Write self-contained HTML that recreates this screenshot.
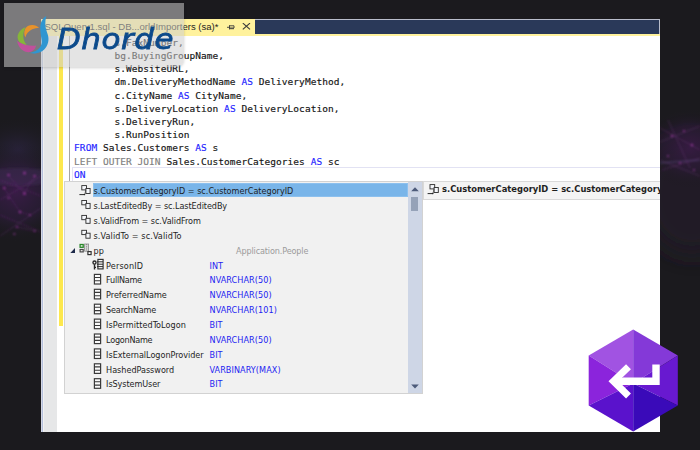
<!DOCTYPE html>
<html>
<head>
<meta charset="utf-8">
<title>SQL Complete</title>
<style>
html,body{margin:0;padding:0;}
body{width:700px;height:450px;overflow:hidden;position:relative;background:#1b1a1e;
 font-family:"DejaVu Sans Condensed","Liberation Sans",sans-serif;}
.abs{position:absolute;}
#bg{left:0;top:0;width:700px;height:450px;background:#1b1a1e;}
#win{left:41px;top:19px;width:619px;height:412.8px;background:#fff;overflow:hidden;}
#tab{left:0;top:0;width:213.5px;height:16.5px;background:#fff29d;}
#tabtxt{left:3.5px;top:2px;font:9.55px/11px "Liberation Sans",sans-serif;color:#1e1e1e;white-space:nowrap;}
#bar{left:213.5px;top:0;width:405.5px;height:14.5px;background:#2a3959;box-shadow:inset 0 1px 0 #b9bdcb, inset -1px 0 0 #b9bdcb;}
#yline{left:0;top:14.5px;width:619px;height:2px;background:#fff29d;}
#margin{left:0;top:16.5px;width:15.5px;height:397px;background:#e6e7e8;box-shadow:inset 1px 0 0 #d4d8e4, inset 2px 0 0 #b4bfdc, inset 3px 0 0 #f1f1f1;}
#ybar{left:18px;top:16.5px;width:4px;height:290px;background:#fde84e;}
#gline{left:28px;top:16.5px;width:1px;height:146px;background:#a5a5a5;}
#code{left:33.1px;top:16.9px;font:9.5px/13.18px "DejaVu Sans Mono","Liberation Mono",monospace;letter-spacing:.05px;color:#141414;white-space:pre;-webkit-text-stroke:.15px;}
#code .k{color:#1f1fff;}
#code .g{color:#808080;}
#curline{left:30.5px;top:148.3px;width:600px;height:16px;border:1.5px solid #e2e2f3;box-sizing:border-box;}
#popup{left:23px;top:162px;width:358.5px;height:213px;background:#f1f1f1;border:1px solid #d2d2d2;box-sizing:border-box;overflow:hidden;}
#sel{left:28px;top:1px;width:314.5px;height:14px;background:#79b5e9;box-shadow:inset 0 0 0 1px #8cc0ee;}
.row{position:absolute;left:0;height:14.9px;line-height:14.9px;font-size:9px;color:#1e1e1e;white-space:nowrap;}
.row span{position:absolute;top:0;}
.ty{color:#1d1df2;letter-spacing:.08px;}
#sb{left:342.5px;top:0;width:14px;height:213px;background:#ced6e6;}
#thumb{left:3px;top:14.5px;width:7.5px;height:14px;background:#95a2b8;}
#rp{left:382px;top:162px;width:260px;height:19px;background:#f4f4f4;border:1px solid #d9d9d9;box-sizing:border-box;}
#rptxt{left:401px;top:163.2px;font:bold 9.3px/13px "DejaVu Sans Condensed","Liberation Sans",sans-serif;color:#1e1e1e;white-space:nowrap;}
#wm{left:4px;top:3px;width:180px;height:64px;background:rgba(205,205,205,.54);border-radius:0 0 8px 0;box-shadow:0 1px 3px rgba(0,0,0,.18);}
#wmtxt{left:57px;top:20px;font:italic 28.5px/40px "DejaVu Sans","Liberation Sans",sans-serif;letter-spacing:.5px;color:#0c4a8b;-webkit-text-stroke:.8px #0c4a8b;white-space:nowrap;transform:scaleX(1.085);transform-origin:0 0;}
</style>
</head>
<body>
<div id="bg" class="abs">
<svg width="700" height="450" viewBox="0 0 700 450" style="position:absolute;left:0;top:0">
  <defs>
    <radialGradient id="gl1"><stop offset="0" stop-color="#3a1c48" stop-opacity=".95"/><stop offset=".55" stop-color="#2c1d3a" stop-opacity=".7"/><stop offset="1" stop-color="#1b1a1e" stop-opacity="0"/></radialGradient>
    <radialGradient id="gl2"><stop offset="0" stop-color="#2b2440" stop-opacity=".9"/><stop offset="1" stop-color="#1b1a1e" stop-opacity="0"/></radialGradient>
    <radialGradient id="gr1"><stop offset="0" stop-color="#371b43" stop-opacity=".95"/><stop offset=".55" stop-color="#2a1b35" stop-opacity=".7"/><stop offset="1" stop-color="#1b1a1e" stop-opacity="0"/></radialGradient>
    <filter id="bl2" x="-50%" y="-50%" width="200%" height="200%"><feGaussianBlur stdDeviation="12"/></filter>
    <filter id="bl" x="-20%" y="-20%" width="140%" height="140%"><feGaussianBlur stdDeviation="1"/></filter>
  </defs>
  <ellipse cx="18" cy="150" rx="50" ry="34" fill="url(#gl2)"/>
  <ellipse cx="16" cy="192" rx="52" ry="50" fill="url(#gl1)"/>
  <ellipse cx="18" cy="177" rx="42" ry="9" fill="#4a3362" fill-opacity=".35" filter="url(#bl)"/>
  <ellipse cx="692" cy="195" rx="50" ry="60" fill="#231a2b" fill-opacity=".7" filter="url(#bl2)"/>
  <ellipse cx="690" cy="148" rx="48" ry="40" fill="url(#gr1)"/>
  <g filter="url(#bl)" fill="none" stroke="#8a3596" stroke-opacity=".3" stroke-width=".9">
    <path d="M0 180L41 196M0 200L41 176M0 215L41 232M0 236L41 208M8 175L24 193L35 176M4 188L20 212L30 215M17 227L35 231"/>
    <path d="M660 142L700 126M660 128L700 150M662 170L700 158M668 120L690 168M660 160L700 176" stroke="#9040a0"/>
    <path d="M660 163L700 160" stroke="#6a5a98" stroke-opacity=".6"/>
  </g>
  <g filter="url(#bl)" fill="#a23aa6" fill-opacity=".75">
    <circle cx="8.6" cy="175" r="1.3"/><circle cx="24.5" cy="173" r="1.5"/><circle cx="34.6" cy="176" r="1.2"/>
    <circle cx="4.3" cy="188" r="1.2"/><circle cx="24.5" cy="193.5" r="1.5"/><circle cx="8.6" cy="198" r="1.1"/>
    <circle cx="20" cy="212" r="1.3"/><circle cx="30" cy="215" r="1"/><circle cx="17" cy="227" r="1.1"/>
    <circle cx="34.6" cy="231" r="1"/><circle cx="14.4" cy="234" r="1"/>
    <circle cx="672" cy="136" r="1.2"/><circle cx="684" cy="131" r="1.1"/><circle cx="692" cy="145" r="1.2"/>
    <circle cx="668" cy="156" r="1"/><circle cx="680" cy="163" r="1.1"/><circle cx="694" cy="170" r="1"/>
  </g>
</svg>
</div>

<div id="win" class="abs">
  <div id="tab" class="abs"></div>
  <div id="tabtxt" class="abs">SQLQuery1.sql - DB...orldImporters (sa)*</div>
  <svg class="abs" style="left:185px;top:4px" width="26" height="9" viewBox="0 0 26 9">
    <g fill="none" stroke="#3a3a3a" stroke-width="0.9">
      <path d="M1 4.3H3.5M3.5 2.2V6.4M3.5 2.8H8V5H3.5M3.5 5.7H8"/>
      <path d="M16.8 0.1L24 6.4M24 0.1L16.8 6.4" stroke-width="1.1"/>
    </g>
  </svg>
  <div id="bar" class="abs"></div>
  <div id="yline" class="abs"></div>
  <div id="margin" class="abs"></div>
  <div id="ybar" class="abs"></div>
  <div id="gline" class="abs"></div>
  <div id="curline" class="abs"></div>
<div id="code" class="abs">       s.FaxNumber,
       bg.BuyingGroupName,
       s.WebsiteURL,
       dm.DeliveryMethodName <span class="k">AS</span> DeliveryMethod,
       c.CityName <span class="k">AS</span> CityName,
       s.DeliveryLocation <span class="k">AS</span> DeliveryLocation,
       s.DeliveryRun,
       s.RunPosition
<span class="k">FROM</span> Sales.Customers <span class="k">AS</span> s
<span class="g">LEFT OUTER JOIN</span> Sales.CustomerCategories <span class="k">AS</span> sc
<span class="k">ON</span></div>

  <div id="popup" class="abs">
    <div id="sel" class="abs"></div>
    <div class="row" style="top:2.20px"><span style="left:28.5px">s.CustomerCategoryID = sc.CustomerCategoryID</span></div>
    <div class="row" style="top:17.06px"><span style="left:28.5px;letter-spacing:-0.075px">s.LastEditedBy = sc.LastEditedBy</span></div>
    <div class="row" style="top:31.92px"><span style="left:28.5px;letter-spacing:-0.06px">s.ValidFrom = sc.ValidFrom</span></div>
    <div class="row" style="top:46.78px"><span style="left:28.5px;letter-spacing:0.11px">s.ValidTo = sc.ValidTo</span></div>
    <div class="row" style="top:61.64px"><span style="left:28.5px">pp</span><span style="left:171px;color:#9b9b9b;letter-spacing:-.13px">Application.People</span></div>
    <div class="row" style="top:76.50px"><span style="left:41.1px;letter-spacing:0.16px">PersonID</span><span class="ty" style="left:144.5px">INT</span></div>
    <div class="row" style="top:91.36px"><span style="left:41.1px;letter-spacing:-0.24px">FullName</span><span class="ty" style="left:144.5px">NVARCHAR(50)</span></div>
    <div class="row" style="top:106.22px"><span style="left:41.1px;letter-spacing:-0.02px">PreferredName</span><span class="ty" style="left:144.5px">NVARCHAR(50)</span></div>
    <div class="row" style="top:121.08px"><span style="left:41.1px;letter-spacing:-0.18px">SearchName</span><span class="ty" style="left:144.5px">NVARCHAR(101)</span></div>
    <div class="row" style="top:135.94px"><span style="left:41.1px;letter-spacing:0.055px">IsPermittedToLogon</span><span class="ty" style="left:144.5px">BIT</span></div>
    <div class="row" style="top:150.80px"><span style="left:41.1px;letter-spacing:-0.24px">LogonName</span><span class="ty" style="left:144.5px">NVARCHAR(50)</span></div>
    <div class="row" style="top:165.66px"><span style="left:41.1px;letter-spacing:-0.02px">IsExternalLogonProvider</span><span class="ty" style="left:144.5px">BIT</span></div>
    <div class="row" style="top:180.52px"><span style="left:41.1px;letter-spacing:-0.02px">HashedPassword</span><span class="ty" style="left:144.5px">VARBINARY(MAX)</span></div>
    <div class="row" style="top:195.38px"><span style="left:41.1px;letter-spacing:-0.09px">IsSystemUser</span><span class="ty" style="left:144.5px">BIT</span></div>
    <div id="sb" class="abs">
      <div id="thumb" class="abs"></div>
      <svg class="abs" style="left:0;top:0" width="14" height="213" viewBox="0 0 14 213">
        <path d="M3.2 9.2L7 5.2L10.8 9.2Z" fill="#4d5b7a"/>
        <path d="M3.2 202.5L7 206.5L10.8 202.5Z" fill="#4d5b7a"/>
      </svg>
    </div>
  </div>

  <div id="rp" class="abs"></div>
  <div id="rptxt" class="abs">s.CustomerCategoryID = sc.CustomerCategoryID</div>
</div>


<svg id="icons" class="abs" style="left:0;top:0" width="700" height="450" viewBox="0 0 700 450">
  <defs>
    <g id="fk">
      <rect x="81.8" y="185.6" width="4.7" height="4.3" fill="#f6f8fc" stroke="#2a2a2a" stroke-width=".9"/>
      <rect x="85.9" y="188.5" width="4.2" height="5" fill="#f6f8fc" stroke="#2a2a2a" stroke-width=".9"/>
    </g>
    <g id="fkm">
      <path d="M85.7 190.2L84.9 194.2" stroke="#2a2a2a" stroke-width=".6" fill="none"/>
      <path d="M79.4 194.6H85.1" stroke="#2a2a2a" stroke-width="1" fill="none"/>
      <circle cx="84.4" cy="194.4" r=".75" fill="#2a2a2a"/>
    </g>
    <g id="col">
      <rect x="94.4" y="274.4" width="6.2" height="9.6" fill="#fafafa" stroke="#3a3a3a" stroke-width="1.2"/>
      <path d="M94.4 277.5H100.6M94.4 280.8H100.6" stroke="#3a3a3a" stroke-width="1.1" fill="none"/>
    </g>
  </defs>
  <use href="#fk"/><use href="#fkm"/>
  <use href="#fk" y="14.9"/>
  <use href="#fk" y="29.8"/>
  <use href="#fk" y="44.7"/>
  <!-- expand triangle -->
  <path d="M70.3 252.9H75V248Z" fill="#1e2a4a"/>
  <!-- table icon -->
  <rect x="80.1" y="244.5" width="3.1" height="2.8" fill="#e8f4e8" stroke="#2a862a" stroke-width="1.3"/>
  <rect x="80.1" y="249.5" width="3.1" height="2.4" fill="#f4f4f4" stroke="#4a4a4a" stroke-width="1.2"/>
  <rect x="84.6" y="244" width="4" height="7.2" fill="#d8d8d8" stroke="#8a8a8a" stroke-width=".8"/>
  <path d="M86.6 244V251" stroke="#777" stroke-width=".8" stroke-dasharray="1.2 1"/>
  <rect x="87.9" y="251.6" width="3.2" height="3" fill="#fff" stroke="#333" stroke-width="1.2"/>
  <!-- key + column -->
  <circle cx="94.5" cy="262.5" r="1.55" fill="#f4f4f4" stroke="#262626" stroke-width="1.35"/>
  <path d="M94.5 264.2V269.4M94.5 267.4H96" stroke="#262626" stroke-width="1.4" fill="none"/>
  <rect x="97.9" y="259.4" width="5.2" height="9.5" fill="#fafafa" stroke="#2e2e2e" stroke-width="1.15"/>
  <path d="M97 261.8H103M97 264.2H103M97 266.6H103" stroke="#2e2e2e" stroke-width="1" fill="none"/>
  <!-- column icons -->
  <use href="#col"/>
  <use href="#col" y="14.9"/>
  <use href="#col" y="29.8"/>
  <use href="#col" y="44.7"/>
  <use href="#col" y="59.6"/>
  <use href="#col" y="74.5"/>
  <use href="#col" y="89.4"/>
  <use href="#col" y="104.3"/>
  <!-- right panel icon -->
  <g transform="translate(348.2,-1)"><use href="#fk"/><use href="#fkm"/></g>
</svg>

<svg id="hex" class="abs" style="left:580px;top:322px" width="110" height="118" viewBox="580 322 110 118">
  <polygon points="633.2,329.6 588.7,355.4 633.2,383.5" fill="#a153e2"/>
  <polygon points="633.2,329.6 677.8,355.4 633.2,383.5" fill="#8439d8"/>
  <polygon points="588.7,355.4 588.7,405.6 633.2,383.5" fill="#8b24dc"/>
  <polygon points="677.8,355.4 677.8,405.6 633.2,383.5" fill="#6819d0"/>
  <polygon points="588.7,405.6 633.2,431.4 633.2,383.5" fill="#5a12cc"/>
  <polygon points="677.8,405.6 633.2,431.4 633.2,383.5" fill="#3a0ab9"/>
  <path d="M614 381.3H656V364.6" fill="none" stroke="#fff" stroke-width="7.4"/>
  <path d="M628.5 366.7L613.5 381.3L628.5 395.9" fill="none" stroke="#fff" stroke-width="7"/>
</svg>
<div id="wm" class="abs"></div>
<svg id="swirl" class="abs" style="left:10px;top:10px" width="50" height="50" viewBox="10 10 50 50">
  <path d="M46.3 15.9C43.5 17.3 41 21 40.3 26C39.8 31 41.2 36 41.7 41C42.2 46.5 38 51.5 29.4 53.1C36.5 54.6 43.5 52 46.5 46.5C49.6 40.8 48.6 36.5 46.9 32C45 27 44.8 21.5 46.3 15.9Z" fill="#2f96d1"/>
  <path d="M39.1 27.8C36.5 24.8 31.5 24 27.8 26.1C24.5 28.2 23.3 33 25.3 37.5C26.3 33.8 28.8 30.8 32.2 29.3C34.5 28.4 37 28.2 39.1 27.8Z" fill="#e8922a"/>
  <path d="M25.6 27.2C20.5 29 17.4 33.5 17.6 37.5C17.8 41.8 21.5 44.6 26.7 45C24.3 42 23.2 39 23.3 35.5C23.4 32.5 24.2 29.8 25.6 27.2Z" fill="#86b53a"/>
  <path d="M17.2 41.1C17.8 46 21 50.2 25.5 51.7C30.5 53.3 35 50.8 36.1 45.6C33 46 29.5 45.8 26 45C22.5 44.2 19.5 42.8 17.2 41.1Z" fill="#c0509b"/>
</svg>

<div id="wmtxt" class="abs">Dhorde</div>
</body>
</html>
